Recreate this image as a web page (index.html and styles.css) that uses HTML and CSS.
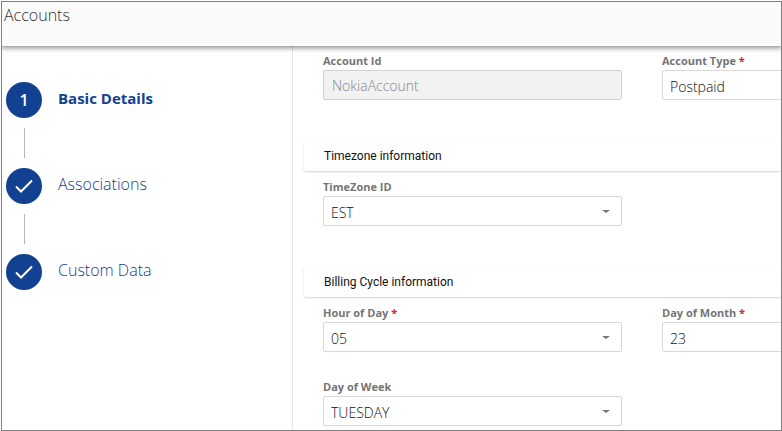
FILE: index.html
```html
<!DOCTYPE html>
<html lang="en">
<head>
<meta charset="utf-8">
<title>Accounts</title>
<link rel="stylesheet" href="styles.css">
</head>
<body>
<div class="frame">
  <header class="topbar"><h1 class="topbar-title">Accounts</h1></header>
  <div class="layout">
    <nav class="sidebar">
      <ol class="steps">
        <li class="step step-current"><span class="step-mark">1</span><a class="step-label" href="#basic">Basic Details</a></li>
        <li class="step"><span class="step-mark"><svg class="check" viewBox="0 0 20 16" aria-hidden="true"><path d="M2 8.5 7 13.5 18 2.5"/></svg></span><a class="step-label" href="#associations">Associations</a></li>
        <li class="step"><span class="step-mark"><svg class="check" viewBox="0 0 20 16" aria-hidden="true"><path d="M2 8.5 7 13.5 18 2.5"/></svg></span><a class="step-label" href="#custom">Custom Data</a></li>
      </ol>
    </nav>
    <main class="content">
      <div class="fields">
        <div class="field">
          <label class="label" for="account-id">Account Id</label>
          <input class="control" id="account-id" type="text" value="NokiaAccount" disabled>
        </div>
        <div class="field">
          <label class="label" for="account-type">Account Type <span class="required">*</span></label>
          <div class="picker"><select class="control" id="account-type"><option>Postpaid</option></select></div>
        </div>
      </div>
      <h2 class="section-title">Timezone information</h2>
      <div class="fields">
        <div class="field">
          <label class="label" for="timezone">TimeZone ID</label>
          <div class="picker"><select class="control" id="timezone"><option>EST</option></select></div>
        </div>
      </div>
      <h2 class="section-title">Billing Cycle information</h2>
      <div class="fields">
        <div class="field">
          <label class="label" for="hour">Hour of Day <span class="required">*</span></label>
          <div class="picker"><select class="control" id="hour"><option>05</option></select></div>
        </div>
        <div class="field">
          <label class="label" for="month-day">Day of Month <span class="required">*</span></label>
          <div class="picker"><select class="control" id="month-day"><option>23</option></select></div>
        </div>
        <div class="field">
          <label class="label" for="week-day">Day of Week</label>
          <div class="picker"><select class="control" id="week-day"><option>TUESDAY</option></select></div>
        </div>
      </div>
    </main>
  </div>
</div>
</body>
</html>
```

FILE: styles.css
```css
* { box-sizing: border-box; }

body {
  margin: 0;
  padding: 1px 0 0 1px;
  background: #fff;
  color: #333;
  font-family: "Open Sans", "Noto Sans", sans-serif;
  font-size: 14px;
  font-weight: 300;
}

.frame {
  display: flex;
  flex-direction: column;
  min-height: calc(100vh - 1px);
  border: 1px solid #7f7f7f;
  overflow: hidden;
}

.topbar {
  position: relative;
  height: 44px;
  padding: 2px;
  background: #fafafa;
  box-shadow: 0 1px 5px 1px rgba(0, 0, 0, 0.45);
}

.topbar-title {
  margin: 0;
  font-size: 16px;
  font-weight: 300;
  line-height: 22px;
}

.layout {
  display: flex;
  flex: 1;
}

.sidebar {
  flex: 0 0 291px;
  padding: 36px 4px 0;
  border-right: 1px solid #e6e6e6;
}

.steps {
  display: flex;
  flex-direction: column;
  gap: 50px;
  margin: 0;
  padding: 0;
  list-style: none;
}

.step {
  position: relative;
  display: flex;
  align-items: center;
  gap: 16px;
}

.step + .step::before {
  content: "";
  position: absolute;
  left: 18px;
  top: -40px;
  width: 1px;
  height: 30px;
  background: #b5b5b5;
}

.step-mark {
  display: flex;
  align-items: center;
  justify-content: center;
  width: 36px;
  height: 36px;
  border-radius: 50%;
  background: #124191;
  color: #fff;
  font-size: 16px;
  font-weight: 600;
}

.check {
  width: 20px;
  height: 16px;
  fill: none;
  stroke: #fff;
  stroke-width: 2;
}

.step-label {
  padding-bottom: 4px;
  color: #124191;
  font-size: 16px;
  line-height: 20px;
  text-decoration: none;
}

.step-current .step-label {
  font-size: 15px;
  font-weight: 700;
}

.content {
  flex: 1;
  min-width: 0;
  padding: 6px 0 4px 11px;
}

.fields {
  display: grid;
  grid-template-columns: repeat(2, minmax(299px, 1fr));
  gap: 26px 40px;
  padding-left: 19px;
}

.field {
  display: flex;
  flex-direction: column;
}

.label {
  color: #757575;
  font-size: 11px;
  font-weight: 700;
  line-height: 18px;
}

.required { color: #d9252a; }

.picker {
  position: relative;
  display: flex;
}

.picker::after {
  content: "";
  position: absolute;
  right: 12px;
  top: 14px;
  border: solid transparent;
  border-width: 3px 4px 0;
  border-top-color: #757575;
  pointer-events: none;
}

.control {
  width: 100%;
  height: 30px;
  margin: 0;
  padding: 0 8px;
  border: 1px solid #d8d8d8;
  border-radius: 2px;
  background: #fff;
  color: #111;
  font: inherit;
  appearance: none;
}

select.control { padding: 3px 7px 0; }

.control:disabled {
  border-color: #d0d0d0;
  background: #f2f2f2;
  color: #888;
}

.section-title {
  margin: 41px 0 7px;
  padding-left: 20px;
  border-radius: 2px;
  box-shadow: 0 1px 2px rgba(0, 0, 0, 0.18);
  color: #111;
  font-family: Roboto, "Open Sans", sans-serif;
  font-size: 12px;
  font-weight: 400;
  line-height: 30px;
}
```
